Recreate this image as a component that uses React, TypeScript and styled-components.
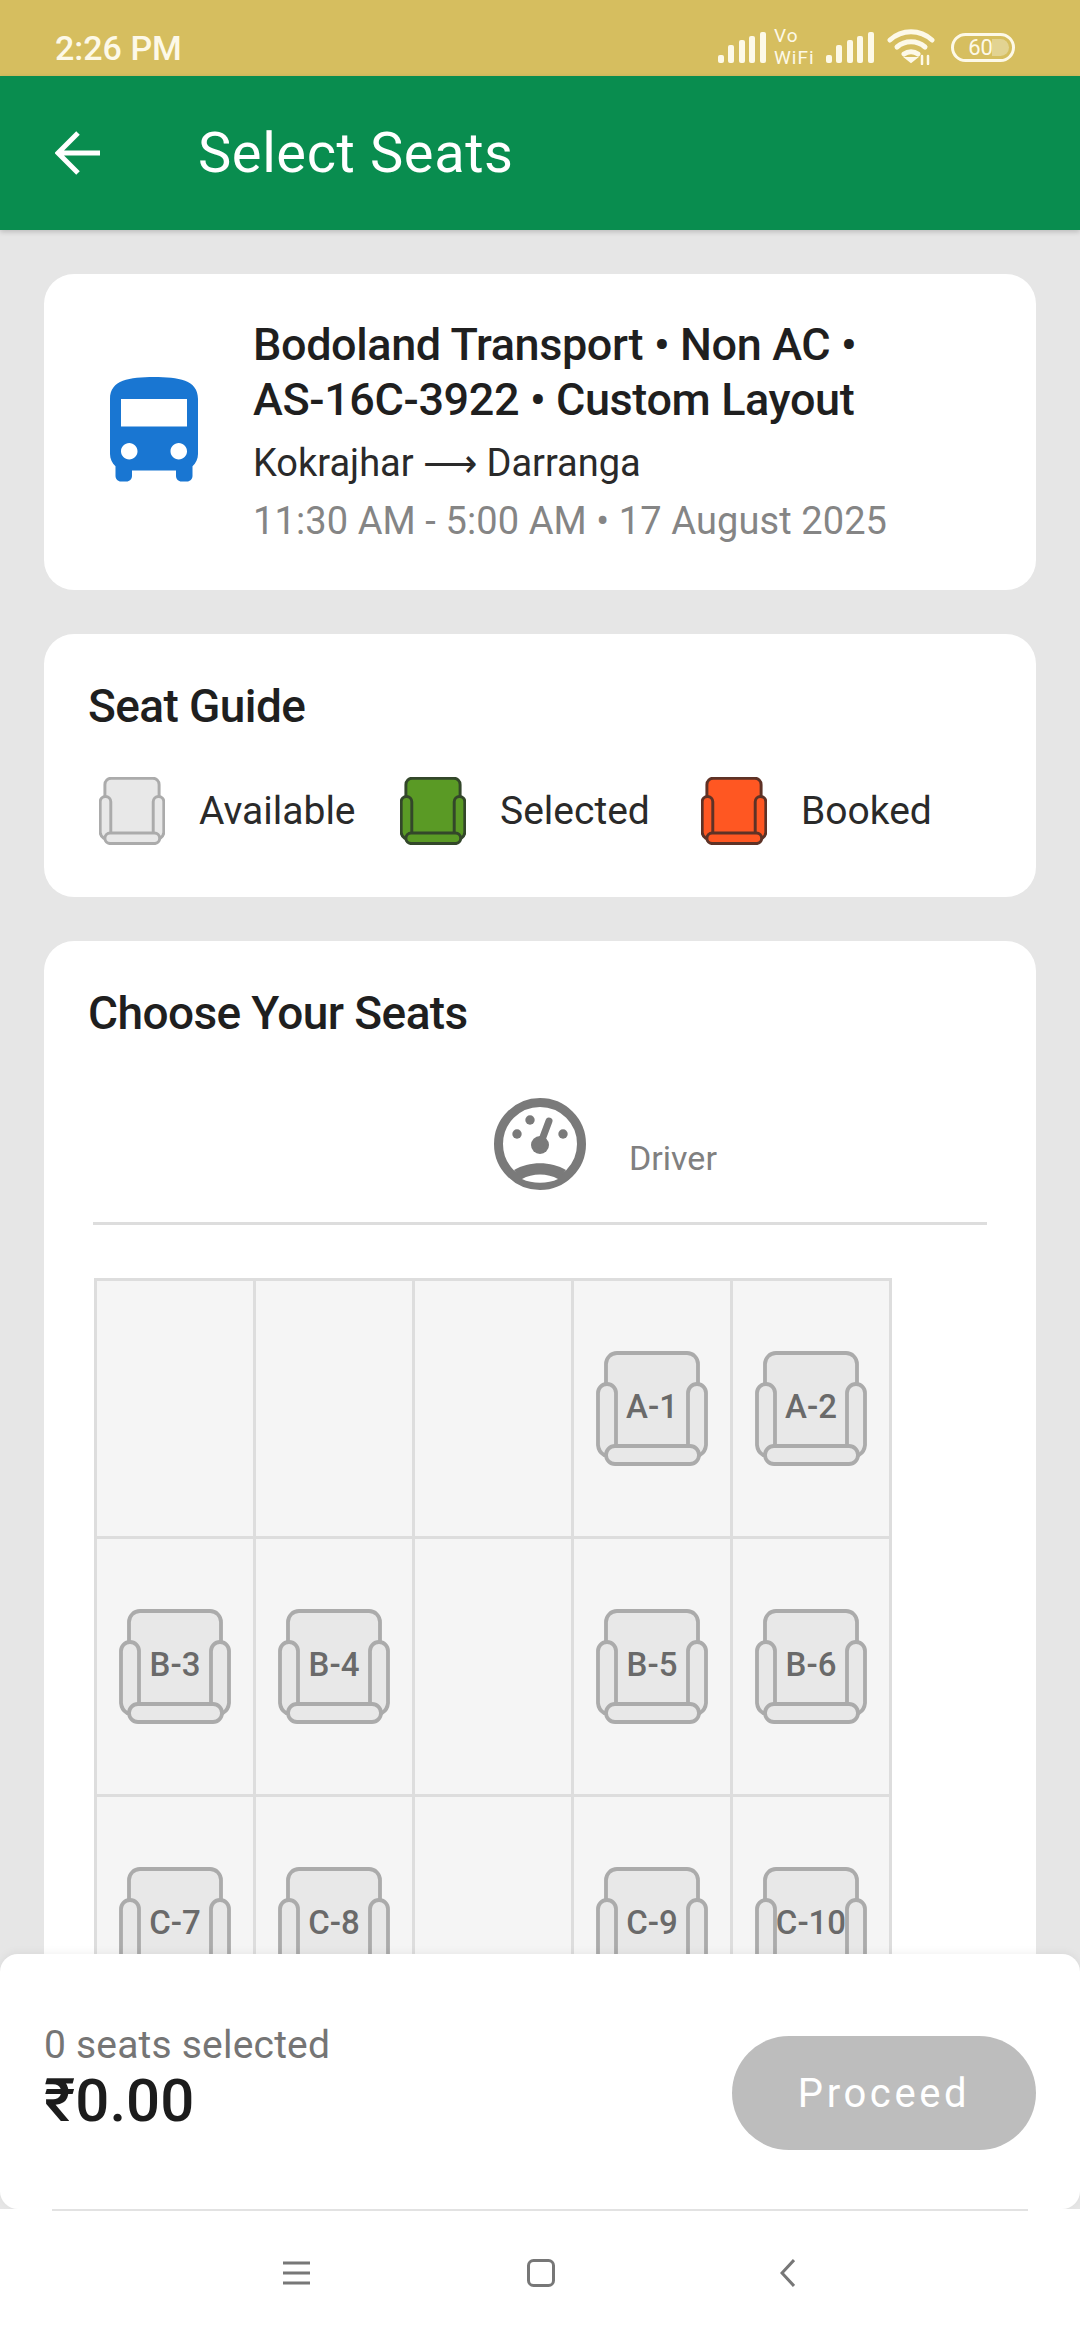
import React from "react";
import styled, { createGlobalStyle } from "styled-components";

const Global = createGlobalStyle`
  html, body { margin: 0; padding: 0; background: #e6e6e6; }
  * { box-sizing: border-box; }
  body { font-family: "Roboto", "Liberation Sans", sans-serif; }
`;

const Screen = styled.div`
  width: 1080px;
  height: 2340px;
  display: flex;
  flex-direction: column;
  overflow: hidden;
  background: #e6e6e6;
`;
const StatusBar = styled.div`
  height: 76px;
  flex: none;
  background: #d6be5f;
  display: flex;
  align-items: center;
  justify-content: space-between;
  padding: 0 65px 0 55px;
  color: #fdf9e8;
`;
const Clock = styled.span`
  font-size: 34px;
  font-weight: 500;
  margin-top: 20px;
`;
const StatusIcons = styled.div`
  display: flex;
  align-items: center;
  margin-top: 18px;
`;
const VoWifi = styled.div`
  display: flex;
  flex-direction: column;
  font-size: 19px;
  line-height: 22px;
  letter-spacing: 1px;
  margin: 0 9px 0 8px;
  width: 43px;
  font-family: "Roboto", sans-serif;
`;
const Battery = styled.div`
  position: relative;
  width: 64px;
  height: 29px;
  margin-left: 16px;
  border: 3px solid #fdf9e8;
  border-radius: 15px;
  display: flex;
  align-items: center;
  justify-content: center;
  font-size: 22px;
  padding-right: 5px;
  overflow: hidden;
`;
const BatteryEmpty = styled.span`
  position: absolute;
  right: 3px;
  top: 3px;
  bottom: 3px;
  width: 17px;
  background: #e2d392;
  border-radius: 0 10px 10px 0;
`;
const BatteryText = styled.span`
  position: relative;
`;
const AppBar = styled.header`
  height: 154px;
  flex: none;
  background: #098d4f;
  display: flex;
  align-items: center;
  padding-left: 55px;
  color: #fff;
  box-shadow: 0 2px 5px rgba(0, 0, 0, 0.18);
  position: relative;
  z-index: 2;
`;
const Title = styled.h1`
  margin: 0 0 0 98px;
  font-size: 56px;
  font-weight: 400;
  letter-spacing: 0.6px;
`;
const Body = styled.main`
  flex: 1;
  position: relative;
  overflow: hidden;
  padding: 44px 44px 0;
  display: flex;
  flex-direction: column;
  gap: 44px;
`;
const Card = styled.section`
  background: #fff;
  border-radius: 30px;
  flex: none;
`;
const TripCard = styled(Card)`
  height: 316px;
  display: flex;
  align-items: center;
  padding-left: 44px;
`;
const TripText = styled.div`
  margin: 2px 0 0 33px;
`;
const TripTitle = styled.div`
  font-size: 45px;
  line-height: 55px;
  font-weight: 500;
  color: #1f1f1f;
  letter-spacing: -0.4px;
`;
const TripRoute = styled.div`
  font-size: 38px;
  line-height: 58px;
  color: #2a2a2a;
  margin-top: 7px;
`;
const TripTime = styled.div`
  font-size: 38px;
  line-height: 58px;
  color: #858585;
  letter-spacing: 0.1px;
`;
const GuideCard = styled(Card)`
  height: 263px;
  padding: 44px 44px 0;
`;
const SectionTitle = styled.h2`
  margin: 0;
  font-size: 46px;
  line-height: 56px;
  font-weight: 500;
  color: #1f1f1f;
  letter-spacing: -0.6px;
`;
const Legend = styled.div`
  display: flex;
  margin: 43px 0 0 11px;
`;
const LegendItem = styled.div`
  width: 301px;
  flex: none;
  display: flex;
  align-items: center;
  gap: 34px;
  font-size: 39px;
  color: #2a2a2a;
`;
const SeatsCard = styled(Card)`
  padding: 44px 44px 0;
  height: 1300px;
`;
const DriverRow = styled.div`
  display: grid;
  grid-template-columns: 1fr 92px 1fr;
  margin: 57px 5px 0;
  height: 92px;
`;
const DriverLabel = styled.span`
  grid-column: 3;
  align-self: end;
  margin: 0 0 12px 43px;
  font-size: 34px;
  color: #808080;
`;
const DriverIcon = styled.svg`
  grid-column: 2;
  width: 92px;
  height: 92px;
`;
const Divider = styled.div`
  height: 3px;
  background: #ddd;
  margin: 32px 5px 0 5px;
`;
const SeatGrid = styled.div`
  width: 798px;
  margin: 53px 0 0 6px;
  display: grid;
  grid-template-columns: repeat(5, 1fr);
  grid-auto-rows: 258px;
  border-top: 3px solid #ddd;
  border-left: 3px solid #ddd;
`;
const Cell = styled.div`
  background: #f5f5f5;
  border-right: 3px solid #ddd;
  border-bottom: 3px solid #ddd;
  display: flex;
  align-items: center;
  justify-content: center;
`;
const SeatWrap = styled.div`
  position: relative;
  width: 112px;
  height: 115px;
`;
const SeatLabel = styled.span`
  position: absolute;
  inset: 0 0 4px 0;
  display: flex;
  align-items: center;
  justify-content: center;
  font-size: 33px;
  font-weight: 500;
  color: #6a6a6a;
`;
const BottomBar = styled.div`
  position: absolute;
  left: 0;
  right: 0;
  bottom: 0;
  height: 255px;
  background: #fff;
  border-radius: 18px;
  box-shadow: 0 -2px 8px rgba(0, 0, 0, 0.05);
  display: flex;
  align-items: flex-start;
  justify-content: space-between;
  padding: 0 44px;
`;
const Summary = styled.div`
  margin-top: 66px;
`;
const SeatCount = styled.div`
  font-size: 39px;
  line-height: 50px;
  color: #757575;
  letter-spacing: 0.2px;
`;
const Total = styled.div`
  font-size: 60px;
  line-height: 62px;
  font-weight: 500;
  color: #1c1c1c;
`;
const Proceed = styled.button`
  margin-top: 82px;
  width: 304px;
  height: 114px;
  border: 0;
  border-radius: 57px;
  background: #bdbdbd;
  color: #fff;
  font-family: inherit;
  font-size: 40px;
  letter-spacing: 3.6px;
`;
const NavBar = styled.nav`
  height: 131px;
  flex: none;
  background: #fff;
  position: relative;
  display: grid;
  grid-template-columns: 283px 27px 217px 28px 225px 15px;
  align-items: center;
  padding-bottom: 1px;
`;
const NavLine = styled.div`
  position: absolute;
  left: 52px;
  right: 52px;
  top: 0;
  height: 2px;
  background: #e2e2e2;
`;
const NavSvg = styled.svg<{ $col: number }>`
  grid-column: ${(p) => p.$col};
  display: block;
  margin-bottom: 2px;
`;

type Tone = "available" | "selected" | "booked";
const tones: Record<Tone, { fill: string; stroke: string }> = {
  available: { fill: "#e8e8e8", stroke: "#ababab" },
  selected: { fill: "#5a9a25", stroke: "#33472a" },
  booked: { fill: "#ff5722", stroke: "#5e3226" },
};

const SeatSvg = ({ tone, size }: { tone: Tone; size: number }) => {
  const { fill, stroke } = tones[tone];
  return (
    <svg width={size} height={(size * 115) / 112} viewBox="0 0 112 115" fill={fill} stroke={stroke} strokeWidth={size > 100 ? 3.8 : 5}>
      <path d="M10 98V13a11 11 0 0 1 11-11h70a11 11 0 0 1 11 11v85z" />
      <path d="M2 42a9 9 0 0 1 18 0v55H92V42a9 9 0 0 1 18 0v52a13 13 0 0 1-6 10H8a13 13 0 0 1-6-10z" />
      <rect x="10" y="95" width="93" height="18" rx="9" />
    </svg>
  );
};

const Bars = () => (
  <svg width="48" height="32" viewBox="0 0 48 32" fill="#fdf9e8">
    <rect x="0" y="24" width="6" height="8" rx="2" />
    <rect x="10" y="14" width="6" height="18" rx="2" />
    <rect x="21" y="9" width="6" height="23" rx="2" />
    <rect x="31" y="5" width="6" height="27" rx="2" />
    <rect x="42" y="1" width="6" height="31" rx="2" />
  </svg>
);

const rows: (string | null)[][] = [
  [null, null, null, "A-1", "A-2"],
  ["B-3", "B-4", null, "B-5", "B-6"],
  ["C-7", "C-8", null, "C-9", "C-10"],
  ["D-11", "D-12", null, "D-13", "D-14"],
];

export default function App() {
  return (
    <Screen>
      <Global />
      <StatusBar>
        <Clock>2:26 PM</Clock>
        <StatusIcons>
          <Bars />
          <VoWifi>
            <span>Vo</span>
            <span>WiFi</span>
          </VoWifi>
          <Bars />
          <svg width="48" height="36" viewBox="0 0 48 36" fill="none" stroke="#fdf9e8" strokeWidth="5" strokeLinecap="round" style={{ marginLeft: 13 }}>
            <path d="M3 11C15 0 33 0 45 11" />
            <path d="M10 18c8-7 20-7 28 0" />
            <path d="M17 25c4-3 10-3 14 0" />
            <path d="M24 33l-5-4h10z" fill="#fdf9e8" strokeWidth="2" />
            <path d="M35 27v8M41 27v8" strokeWidth="2.5" />
          </svg>
          <Battery>
            <BatteryEmpty />
            <BatteryText>60</BatteryText>
          </Battery>
        </StatusIcons>
      </StatusBar>

      <AppBar>
        <svg width="45" height="44" viewBox="0 0 45 44" fill="none" stroke="#fff" strokeWidth="5">
          <path d="M45 22H4M23 2 3 22l20 20" />
        </svg>
        <Title>Select Seats</Title>
      </AppBar>

      <Body>
        <TripCard>
          <svg width="132" height="132" viewBox="0 0 24 24" fill="#1976d2">
            <path d="M4 16c0 .88.39 1.67 1 2.22V20c0 .55.45 1 1 1h1c.55 0 1-.45 1-1v-1h8v1c0 .55.45 1 1 1h1c.55 0 1-.45 1-1v-1.78c.61-.55 1-1.34 1-2.22V6c0-3.5-3.58-4-8-4s-8 .5-8 4v10zm3.5 1c-.83 0-1.5-.67-1.5-1.5S6.67 14 7.5 14s1.5.67 1.5 1.5S8.33 17 7.5 17zm9 0c-.83 0-1.5-.67-1.5-1.5s.67-1.5 1.5-1.5 1.5.67 1.5 1.5-.67 1.5-1.5 1.5zm1.5-6H6V6h12v5z" />
          </svg>
          <TripText>
            <TripTitle>
              Bodoland Transport • Non AC •<br />
              AS-16C-3922 • Custom Layout
            </TripTitle>
            <TripRoute>Kokrajhar ⟶ Darranga</TripRoute>
            <TripTime>11:30 AM - 5:00 AM • 17 August 2025</TripTime>
          </TripText>
        </TripCard>

        <GuideCard>
          <SectionTitle>Seat Guide</SectionTitle>
          <Legend>
            <LegendItem>
              <SeatSvg tone="available" size={66} />
              Available
            </LegendItem>
            <LegendItem>
              <SeatSvg tone="selected" size={66} />
              Selected
            </LegendItem>
            <LegendItem>
              <SeatSvg tone="booked" size={66} />
              Booked
            </LegendItem>
          </Legend>
        </GuideCard>

        <SeatsCard>
          <SectionTitle>Choose Your Seats</SectionTitle>
          <DriverRow>
            <DriverIcon viewBox="0 0 92 92">
              <circle cx="46" cy="46" r="41.5" fill="none" stroke="#7a7a7a" strokeWidth="9" />
              <circle cx="23" cy="36" r="4.7" fill="#7a7a7a" />
              <circle cx="69" cy="36" r="4.7" fill="#7a7a7a" />
              <circle cx="36" cy="22" r="4.7" fill="#7a7a7a" />
              <circle cx="46" cy="47" r="9" fill="#7a7a7a" />
              <path d="M46 47l9-24" stroke="#7a7a7a" strokeWidth="7" strokeLinecap="round" />
              <path d="M20 72c15-9 37-9 52 0l-6 8c-8 5-32 5-40 0z" fill="#7a7a7a" />
              <path d="M28 81c10-6 26-6 36 0c-10 5-26 5-36 0z" fill="#fff" />
            </DriverIcon>
            <DriverLabel>Driver</DriverLabel>
          </DriverRow>
          <Divider />
          <SeatGrid>
            {rows.flat().map((seat, i) => (
              <Cell key={i}>
                {seat && (
                  <SeatWrap>
                    <SeatSvg tone="available" size={112} />
                    <SeatLabel>{seat}</SeatLabel>
                  </SeatWrap>
                )}
              </Cell>
            ))}
          </SeatGrid>
        </SeatsCard>

        <BottomBar>
          <Summary>
            <SeatCount>0 seats selected</SeatCount>
            <Total>₹0.00</Total>
          </Summary>
          <Proceed>Proceed</Proceed>
        </BottomBar>
      </Body>

      <NavBar>
        <NavLine />
        <NavSvg $col={2} width="27" height="24" viewBox="0 0 27 24" stroke="#777" strokeWidth="3">
          <path d="M0 2h27M0 12h27M0 22h27" />
        </NavSvg>
        <NavSvg $col={4} width="28" height="28" viewBox="0 0 28 28" fill="none" stroke="#777" strokeWidth="3">
          <rect x="1.5" y="1.5" width="25" height="25" rx="5" />
        </NavSvg>
        <NavSvg $col={6} width="15" height="28" viewBox="0 0 15 28" fill="none" stroke="#777" strokeWidth="3">
          <path d="M14 1 2 14l12 13" />
        </NavSvg>
      </NavBar>
    </Screen>
  );
}
